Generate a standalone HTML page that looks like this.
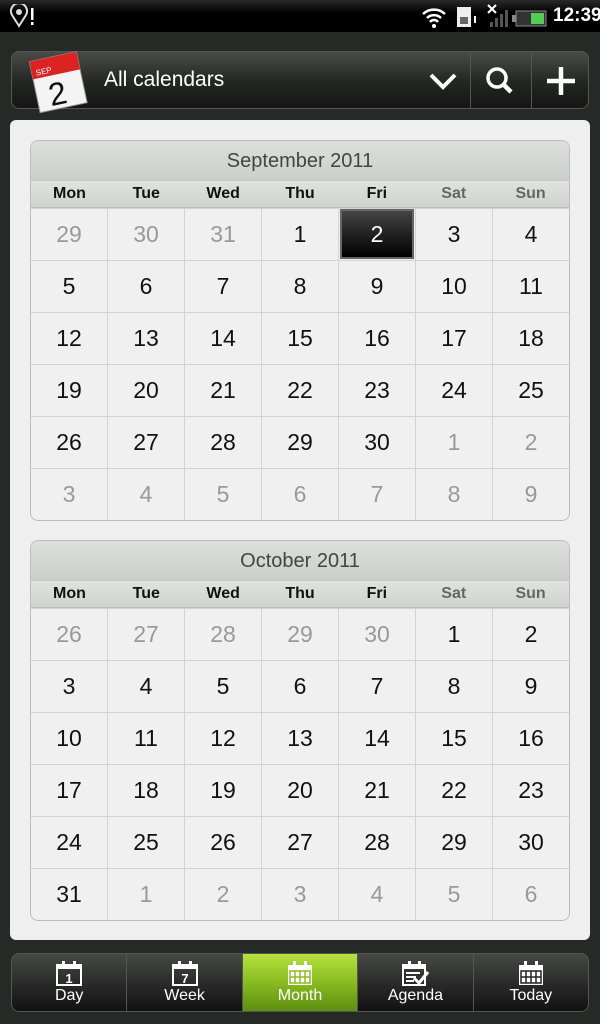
<!DOCTYPE html>
<html><head><style>
*{margin:0;padding:0;box-sizing:border-box}
body{width:600px;height:1024px;background:#262a26;font-family:"Liberation Sans",sans-serif;position:relative;overflow:hidden}
.status{position:absolute;left:0;top:0;width:600px;height:32px;background:linear-gradient(#2a2a2a,#000 40%);color:#fff}
.abar{position:absolute;left:11px;top:51px;width:578px;height:58px;border-radius:8px;background:linear-gradient(#4a4c4a,#262826 50%,#141514);border:1px solid #555}
.panel{position:absolute;left:10px;top:120px;width:580px;height:820px;background:#efefef;border-radius:6px}
.cal{position:absolute;left:30px;width:540px;border:1px solid #bbb;border-radius:8px;overflow:hidden;background:#f0f0f0}
.mh{height:40px;background:linear-gradient(#dcdfdc,#ccd0cc);color:#444;font-size:20px;text-align:center;line-height:40px;border-bottom:1px solid #c8cac8}
.dn{height:27px;background:linear-gradient(#e0e2e0,#d0d3d0);display:flex;border-bottom:1px solid #bbb}
.dn div{flex:1;text-align:center;font-weight:bold;font-size:16px;line-height:26px;color:#111}
.dn div.w{color:#666}
.row{display:flex;height:52px;border-top:1px solid #d4d4d4}
.row:first-of-type{border-top:none}
.row div{flex:1;text-align:center;line-height:51px;font-size:23px;color:#111;border-left:1px solid #d4d4d4;position:relative}
.row div:first-child{border-left:none}
.row div.g{color:#999}
.row div.sel span{position:absolute;left:1px;right:1px;top:0;bottom:1px;background:linear-gradient(#444,#000);color:#fff;border:2px solid #666;line-height:47px}
.tabs{position:absolute;left:11px;top:953px;width:578px;height:59px;border-radius:8px;background:linear-gradient(#474947,#2a2c2a 50%,#111);border:1px solid #555;display:flex;overflow:hidden}
.tabs div{flex:1;border-left:1px solid #555;color:#fff;text-align:center;font-size:16px;padding-top:5px}
.tabs div:first-child{border-left:none}
.tabs div.on{background:linear-gradient(#b6e23c,#7fb31c 60%,#5e8e10)}
.tabs svg{display:block;margin:0 auto 0}
</style></head><body>
<div class="status">
<svg style="position:absolute;left:9px;top:4px" width="26" height="24"><path d="M10 22 L3 11 A8 8 0 1 1 17 11 Z" fill="none" stroke="#ddd" stroke-width="2"/><circle cx="10" cy="8" r="3" fill="#ddd"/><rect x="22" y="4" width="2.5" height="12" fill="#fff"/><rect x="22" y="18" width="2.5" height="3" fill="#fff"/></svg>
<svg style="position:absolute;left:420px;top:4px" width="130" height="26"><path d="M3 10 A16 16 0 0 1 25 10 M7 14 A10 10 0 0 1 21 14 M10 18 A5 5 0 0 1 18 18" fill="none" stroke="#fff" stroke-width="2.5"/><circle cx="14" cy="22" r="2" fill="#fff"/><rect x="37" y="3" width="14" height="20" fill="#eee"/><rect x="40" y="13" width="8" height="7" fill="#666"/><rect x="54" y="12" width="2" height="7" fill="#fff"/><path d="M68 1l8 8M76 1l-8 8" stroke="#fff" stroke-width="2"/><rect x="70" y="18" width="3" height="5" fill="#555"/><rect x="75" y="14" width="3" height="9" fill="#555"/><rect x="80" y="10" width="3" height="13" fill="#555"/><rect x="85" y="6" width="3" height="17" fill="#555"/><rect x="96" y="7" width="30" height="15" fill="#333" stroke="#888"/><rect x="92" y="11" width="4" height="7" fill="#888"/><rect x="111" y="9" width="13" height="11" fill="#5c5"/></svg>
<span style="position:absolute;left:553px;top:5px;font-size:19px;font-weight:bold">12:39</span>
</div>
<div class="abar">
<svg style="position:absolute;left:12px;top:-6px" width="70" height="70"><g transform="rotate(-12 35 35)"><rect x="10" y="10" width="48" height="52" fill="#f4f4f4" stroke="#999"/><rect x="10" y="10" width="48" height="18" fill="#d22"/><text x="14" y="25" font-size="8" fill="#fff" font-family="Liberation Sans">SEP</text><text x="22" y="58" font-size="32" fill="#111" font-family="Liberation Sans">2</text></g></svg>
<span style="position:absolute;left:92px;top:16px;color:#fff;font-size:21px">All calendars</span>
<svg style="position:absolute;left:416px;top:18px" width="30" height="22"><path d="M3 5 L15 17 L27 5" fill="none" stroke="#fff" stroke-width="4"/></svg>
<div style="position:absolute;left:458px;top:0;width:1px;height:56px;background:#555"></div>
<svg style="position:absolute;left:472px;top:14px" width="34" height="30"><circle cx="13" cy="12" r="9" fill="none" stroke="#fff" stroke-width="3.5"/><path d="M19 18 L27 26" stroke="#fff" stroke-width="4.5"/></svg>
<div style="position:absolute;left:519px;top:0;width:1px;height:56px;background:#555"></div>
<svg style="position:absolute;left:533px;top:13px" width="32" height="32"><path d="M16 2V30M2 16H30" stroke="#fff" stroke-width="4.5"/></svg>
</div>
<div class="panel"></div>
<div class="cal" style="top:140px">
<div class="mh">September 2011</div>
<div class="dn"><div>Mon</div><div>Tue</div><div>Wed</div><div>Thu</div><div>Fri</div><div class="w">Sat</div><div class="w">Sun</div></div>
<div class="row"><div class="g">29</div><div class="g">30</div><div class="g">31</div><div>1</div><div class="sel"><span>2</span></div><div>3</div><div>4</div></div>
<div class="row"><div>5</div><div>6</div><div>7</div><div>8</div><div>9</div><div>10</div><div>11</div></div>
<div class="row"><div>12</div><div>13</div><div>14</div><div>15</div><div>16</div><div>17</div><div>18</div></div>
<div class="row"><div>19</div><div>20</div><div>21</div><div>22</div><div>23</div><div>24</div><div>25</div></div>
<div class="row"><div>26</div><div>27</div><div>28</div><div>29</div><div>30</div><div class="g">1</div><div class="g">2</div></div>
<div class="row"><div class="g">3</div><div class="g">4</div><div class="g">5</div><div class="g">6</div><div class="g">7</div><div class="g">8</div><div class="g">9</div></div>
</div>
<div class="cal" style="top:540px">
<div class="mh">October 2011</div>
<div class="dn"><div>Mon</div><div>Tue</div><div>Wed</div><div>Thu</div><div>Fri</div><div class="w">Sat</div><div class="w">Sun</div></div>
<div class="row"><div class="g">26</div><div class="g">27</div><div class="g">28</div><div class="g">29</div><div class="g">30</div><div>1</div><div>2</div></div>
<div class="row"><div>3</div><div>4</div><div>5</div><div>6</div><div>7</div><div>8</div><div>9</div></div>
<div class="row"><div>10</div><div>11</div><div>12</div><div>13</div><div>14</div><div>15</div><div>16</div></div>
<div class="row"><div>17</div><div>18</div><div>19</div><div>20</div><div>21</div><div>22</div><div>23</div></div>
<div class="row"><div>24</div><div>25</div><div>26</div><div>27</div><div>28</div><div>29</div><div>30</div></div>
<div class="row"><div>31</div><div class="g">1</div><div class="g">2</div><div class="g">3</div><div class="g">4</div><div class="g">5</div><div class="g">6</div></div>
</div>
<div class="tabs">
<div><svg width="30" height="28"><rect x="3" y="6" width="24" height="20" fill="none" stroke="#fff" stroke-width="2"/><rect x="3" y="6" width="24" height="4" fill="#fff"/><rect x="8" y="2" width="3" height="6" fill="#fff"/><rect x="19" y="2" width="3" height="6" fill="#fff"/><text x="15" y="24" text-anchor="middle" font-size="13" font-weight="bold" fill="#fff" font-family="Liberation Sans">1</text></svg>Day</div>
<div><svg width="30" height="28"><rect x="3" y="6" width="24" height="20" fill="none" stroke="#fff" stroke-width="2"/><rect x="3" y="6" width="24" height="4" fill="#fff"/><rect x="8" y="2" width="3" height="6" fill="#fff"/><rect x="19" y="2" width="3" height="6" fill="#fff"/><text x="15" y="24" text-anchor="middle" font-size="13" font-weight="bold" fill="#fff" font-family="Liberation Sans">7</text></svg>Week</div>
<div class="on"><svg width="30" height="28"><rect x="3" y="6" width="24" height="20" fill="#fff"/><rect x="8" y="2" width="3" height="6" fill="#fff"/><rect x="19" y="2" width="3" height="6" fill="#fff"/><path d="M5 12h20v12H5z M10 12v12M15 12v12M20 12v12M5 18h20" fill="none" stroke="#8bbd20" stroke-width="1.5"/></svg>Month</div>
<div><svg width="30" height="28"><rect x="3" y="6" width="22" height="20" fill="none" stroke="#fff" stroke-width="2"/><rect x="3" y="6" width="22" height="4" fill="#fff"/><rect x="8" y="2" width="3" height="6" fill="#fff"/><rect x="18" y="2" width="3" height="6" fill="#fff"/><path d="M6 14h14M6 18h10M6 22h8" stroke="#fff" stroke-width="2"/><path d="M14 19l5 5 9-11" fill="none" stroke="#fff" stroke-width="3"/></svg>Agenda</div>
<div><svg width="30" height="28"><rect x="3" y="6" width="24" height="20" fill="#fff"/><rect x="8" y="2" width="3" height="6" fill="#fff"/><rect x="19" y="2" width="3" height="6" fill="#fff"/><path d="M5 12h20v12H5z M10 12v12M15 12v12M20 12v12M5 18h20" fill="none" stroke="#222" stroke-width="1.5"/></svg>Today</div>
</div>
</body></html>
